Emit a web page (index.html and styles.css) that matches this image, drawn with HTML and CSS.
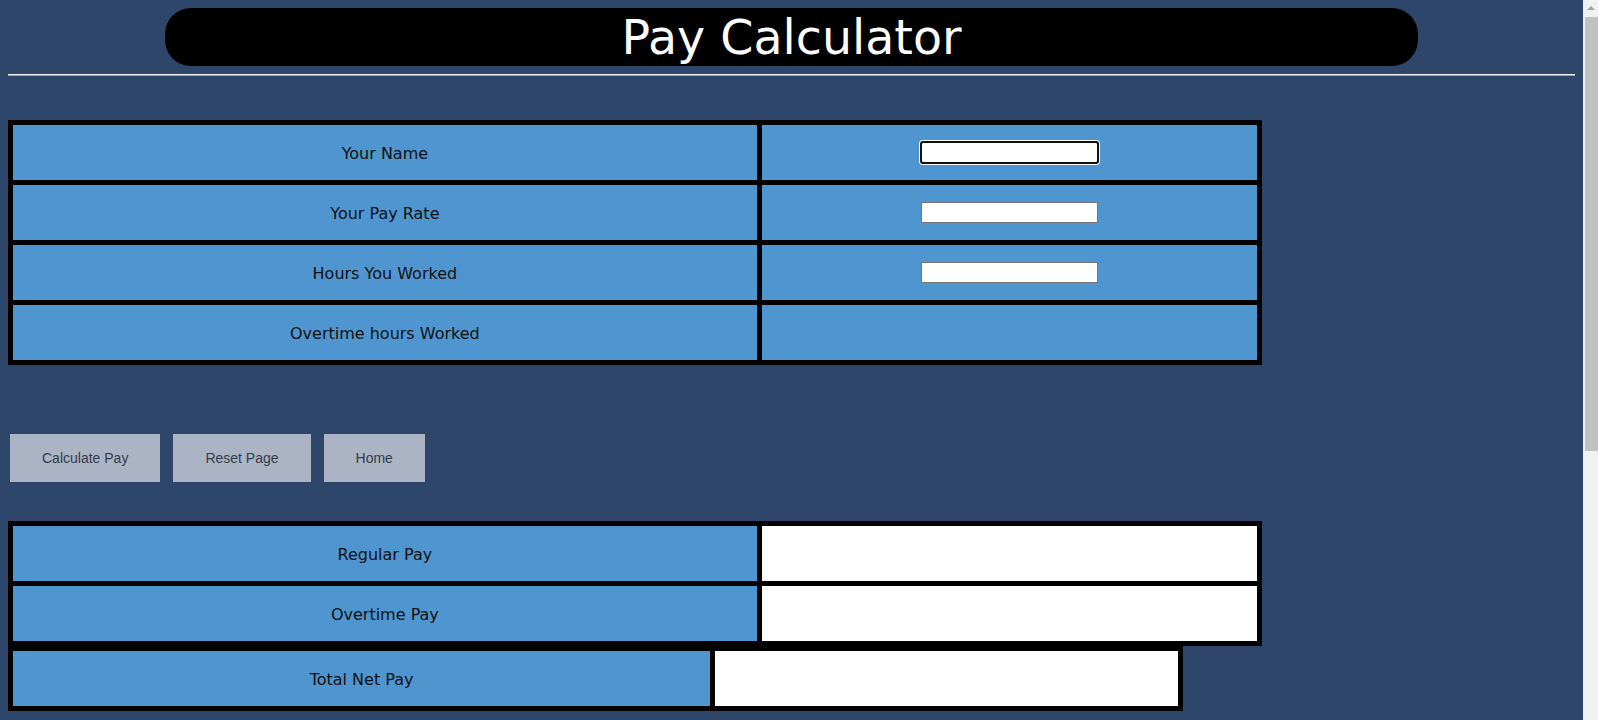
FILE: index.html
```html
<!DOCTYPE html>
<html lang="en">
<head>
<meta charset="utf-8">
<title>Pay Calculator</title>
<link rel="stylesheet" href="styles.css">
</head>
<body>
  <h1 class="title">Pay Calculator</h1>
  <hr class="rule">

  <div class="grid inputs">
    <div class="cell label">Your Name</div>
    <div class="cell field"><input class="text-input focused" type="text" autofocus></div>
    <div class="cell label">Your Pay Rate</div>
    <div class="cell field"><input class="text-input" type="text"></div>
    <div class="cell label">Hours You Worked</div>
    <div class="cell field"><input class="text-input" type="text"></div>
    <div class="cell label">Overtime hours Worked</div>
    <div class="cell field"></div>
  </div>

  <div class="actions">
    <button class="btn" type="button">Calculate Pay</button>
    <button class="btn" type="button">Reset Page</button>
    <button class="btn" type="button">Home</button>
  </div>

  <div class="grid results">
    <div class="cell label">Regular Pay</div>
    <div class="cell output"></div>
    <div class="cell label">Overtime Pay</div>
    <div class="cell output"></div>
  </div>
  <div class="grid total">
    <div class="cell label">Total Net Pay</div>
    <div class="cell output"></div>
  </div>

  <div class="scrollbar" aria-hidden="true">
    <div class="scroll-arrow"></div>
    <div class="scroll-thumb"></div>
  </div>
</body>
</html>
```

FILE: styles.css
```css
html {
  background: #2d4669;
}

body {
  margin: 8px 23px 8px 8px;
  min-height: 1122px;
  background: #2d4669;
  font-family: "DejaVu Sans", Verdana, sans-serif;
  color: #111;
}

.title {
  width: 80%;
  margin: 0 auto;
  height: 58px;
  box-sizing: border-box;
  padding-top: 2px;
  line-height: 56px;
  background: #000;
  color: #fff;
  border-radius: 26px;
  text-align: center;
  font-size: 47.5px;
  font-weight: normal;
}

.rule {
  margin: 8px 0;
  border: 0;
  border-top: 1px solid #f0f0f0;
  border-bottom: 1px solid #9aa3b3;
  height: 0;
}

.grid {
  display: grid;
  grid-template-columns: 744fr 495fr;
  gap: 5px;
  padding: 5px;
  background: #000;
  box-sizing: border-box;
}

.inputs {
  width: 80%;
  margin-top: 44px;
}

.results {
  width: 80%;
  margin-top: 39px;
}

.total {
  width: 75%;
  grid-template-columns: 697fr 463fr;
}

.cell {
  box-sizing: border-box;
  height: 55px;
  padding-top: 2px;
  display: flex;
  align-items: center;
  justify-content: center;
  background: #4f95cf;
  font-size: 16px;
}

.cell.output {
  background: #fff;
}

.cell.field {
  padding-top: 0;
}

.text-input {
  box-sizing: border-box;
  width: 177px;
  height: 21px;
  margin: 0;
  padding: 1px 3px;
  border: 1px solid #767676;
  border-radius: 0;
  background: #fff;
  font-family: "Liberation Sans", Arial, sans-serif;
  font-size: 13.333px;
}

.text-input.focused,
.text-input:focus {
  outline: 2px solid #101010;
  outline-offset: -1px;
  border-radius: 2px;
  box-shadow: 0 0 0 2px #fff;
}

.actions {
  display: flex;
  gap: 13px;
  padding-left: 2px;
  margin-top: 69px;
}

.btn {
  height: 48px;
  padding: 0 31px;
  border: 1px solid #aab4c5;
  background: #aab4c5;
  color: #353c49;
  font-family: "Liberation Sans", Arial, sans-serif;
  font-size: 14px;
  border-radius: 0;
}

/* imitation of the browser's vertical scrollbar */
.scrollbar {
  position: fixed;
  top: 0;
  right: 0;
  width: 15px;
  height: 100vh;
  background: #f1f1f1;
}

.scroll-arrow {
  position: absolute;
  top: 6px;
  left: 4px;
  width: 0;
  height: 0;
  border-left: 4px solid transparent;
  border-right: 4px solid transparent;
  border-bottom: 4px solid #a3a3a3;
}

.scroll-thumb {
  position: absolute;
  top: 17px;
  left: 2px;
  right: 0;
  height: 434px;
  background: #c1c1c1;
}
```
